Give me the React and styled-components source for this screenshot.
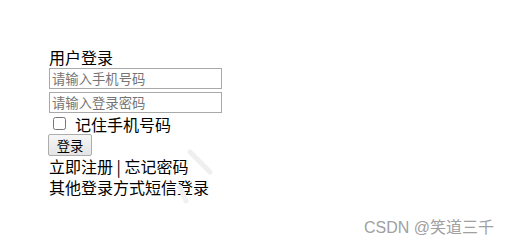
import React, { useState } from 'react'
import styled, { createGlobalStyle } from 'styled-components'

const Global = createGlobalStyle`
html, body {
  margin: 0;
  padding: 0;
  background: #ffffff;
}
body {
  font-family: "Microsoft YaHei", "Noto Sans CJK SC", "Noto Sans", sans-serif;
  color: #000;
}
`

const Page = styled.div`
position: relative;
width: 510px;
height: 246px;
overflow: hidden;
`

const Form = styled.form`
display: flex;
flex-direction: column;
align-items: flex-start;
padding: 47px 0 0 49px;
font-size: 16px;
line-height: 20px;
`

const Title = styled.div`
height: 21px;
`

const Input = styled.input`
box-sizing: border-box;
width: 173px;
height: 21px;
margin: ${p => p.$gap}px 0 0 0;
padding: 0 2px;
border: 1px solid #a9a9a9;
outline: none;
font-family: inherit;
font-size: 13.33px;
color: #000;
background: #fff;
::placeholder {
  color: #757575;
}
`

const Remember = styled.label`
display: flex;
align-items: center;
height: 21px;
gap: 9px;
`

const Check = styled.input`
width: 13px;
height: 13px;
margin: 0 0 0 4px;
`

const Button = styled.button`
box-sizing: border-box;
width: 44px;
height: 22px;
margin: 0 0 0 -1px;
padding: 0;
border: 1px solid #adadad;
border-radius: 2px;
background: linear-gradient(#f6f6f6, #e4e4e4);
font-family: inherit;
font-size: 13.33px;
color: #000;
`

const Line = styled.div`
height: 21px;
line-height: 21px;
white-space: nowrap;
`

const Mark = styled.div`
position: absolute;
right: 16px;
bottom: 8px;
font-family: "Liberation Sans", "Noto Sans CJK SC", sans-serif;
font-size: 16px;
line-height: 20px;
color: #a0a0a0;
`

const Stroke = styled.svg`
position: absolute;
left: 170px;
top: 145px;
pointer-events: none;
`

export default function App() {
  const [Phone, setPhone] = useState("")
  const [Password, setPassword] = useState("")

  return (
    <Page>
      <Global />
      <Form onSubmit={e => e.preventDefault()}>
        <Title>用户登录</Title>
        <Input $gap={0} value={Phone} onChange={e => setPhone(e.target.value)} type="text" placeholder="请输入手机号码" />
        <Input $gap={3} value={Password} onChange={e => setPassword(e.target.value)} type="password" placeholder="请输入登录密码" />
        <Remember>
          <Check type="checkbox" />
          <span>记住手机号码</span>
        </Remember>
        <Button type="submit">登录</Button>
        <Line>立即注册 | 忘记密码</Line>
        <Line>其他登录方式短信登录</Line>
      </Form>
      <Stroke width="45" height="60" viewBox="0 0 45 60">
        <path d="M20 7 L40 27" stroke="#efefef" strokeWidth="5" strokeLinecap="round" fill="none" />
        <path d="M10 42 L16 56" stroke="#f0f0f0" strokeWidth="5" strokeLinecap="round" fill="none" />
      </Stroke>
      <Mark>CSDN @笑道三千</Mark>
    </Page>
  )
}
